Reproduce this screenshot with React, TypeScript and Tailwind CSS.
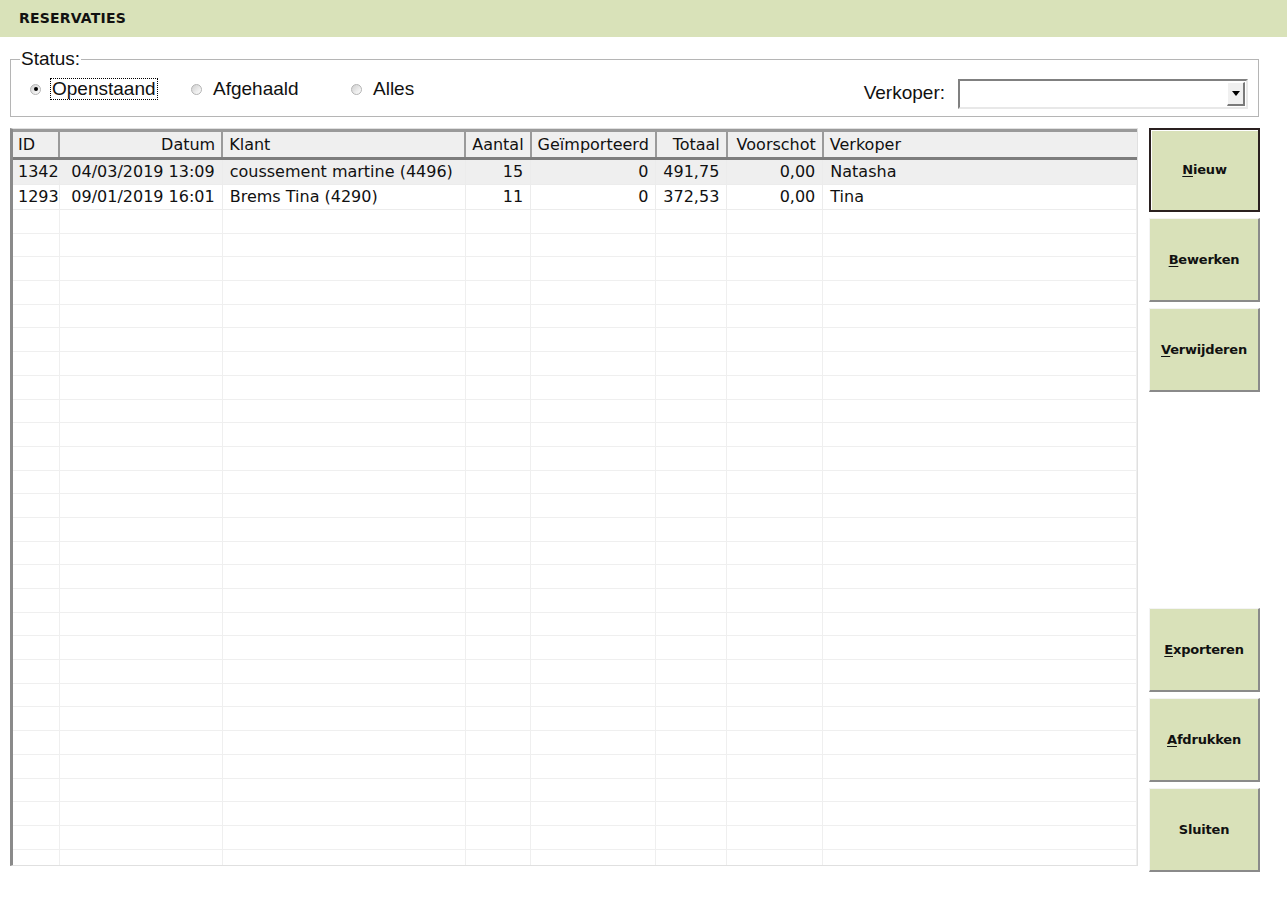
import React from 'react'

const cols = [
  { key: 'id', label: 'ID', w: 45, align: 'left' },
  { key: 'datum', label: 'Datum', w: 163, align: 'right' },
  { key: 'klant', label: 'Klant', w: 243, align: 'left' },
  { key: 'aantal', label: 'Aantal', w: 65, align: 'right' },
  { key: 'imp', label: 'Geïmporteerd', w: 125, align: 'right' },
  { key: 'totaal', label: 'Totaal', w: 71, align: 'right' },
  { key: 'voorschot', label: 'Voorschot', w: 96, align: 'right' },
  { key: 'verkoper', label: 'Verkoper', w: 314, align: 'left' },
] as const

const rows: Record<string, string>[] = [
  { id: '1342', datum: '04/03/2019 13:09', klant: 'coussement martine (4496)', aantal: '15', imp: '0', totaal: '491,75', voorschot: '0,00', verkoper: 'Natasha' },
  { id: '1293', datum: '09/01/2019 16:01', klant: 'Brems Tina (4290)', aantal: '11', imp: '0', totaal: '372,53', voorschot: '0,00', verkoper: 'Tina' },
]

const emptyRows = Array.from({ length: 28 })

function Radio({ checked, label, focused }: { checked?: boolean; label: string; focused?: boolean }) {
  return (
    <label className="flex items-center gap-[10px]">
      <span className="w-[11px] h-[11px] rounded-full border border-[#b4b4b4] bg-gradient-to-br from-[#d0d0d0] to-white flex items-center justify-center">
        {checked && <span className="w-[4px] h-[4px] rounded-full bg-black" />}
      </span>
      <span className={focused ? 'px-[1px] outline outline-1 outline-dotted outline-black leading-[20px]' : 'px-[1px] leading-[20px]'}>{label}</span>
    </label>
  )
}

function Btn({ label, hot, isDefault }: { label: string; hot?: boolean; isDefault?: boolean }) {
  const first = label.slice(0, 1)
  const rest = label.slice(1)
  return (
    <button
      className={
        'w-[111px] h-[84px] bg-[#d9e1b9] text-[13px] font-bold text-[#111] font-["DejaVu_Sans",sans-serif] tracking-[-0.2px] flex items-center justify-center ' +
        (isDefault
          ? 'border-2 border-[#2a2020] shadow-[inset_1px_1px_0_#fff]'
          : 'border-t border-l border-t-[#f4f4f4] border-l-[#f4f4f4] border-b-2 border-r-2 border-b-[#8a8a8a] border-r-[#8a8a8a]')
      }
    >
      {hot ? (
        <span>
          <span className="underline underline-offset-2">{first}</span>
          {rest}
        </span>
      ) : (
        label
      )}
    </button>
  )
}

export default function App() {
  return (
    <div className="w-[1287px] h-[903px] bg-white overflow-hidden font-['Liberation_Sans',Arial,sans-serif] text-black">
      {/* title bar */}
      <div className="h-[37px] bg-[#d9e2b9] flex items-center pl-[19px]">
        <span className="text-[14px] font-bold tracking-[0.2px] font-['DejaVu_Sans',sans-serif] text-[#111]">RESERVATIES</span>
      </div>

      {/* status filter */}
      <fieldset className="mx-[10px] mt-[13px] w-[1249px] h-[67px] border border-[#b5b5b5] pl-[19px] pr-[10px]">
        <legend className="text-[19px] leading-[18px] px-[1px] -ml-[10px] text-[#111]">Status:</legend>
        <div className="flex items-start w-full text-[19px] text-[#111] mt-[11px]">
          <div className="w-[161px]">
            <Radio checked focused label="Openstaand" />
          </div>
          <div className="w-[160px]">
            <Radio label="Afgehaald" />
          </div>
          <Radio label="Alles" />
          <div className="ml-auto flex items-start gap-[13px] mt-[-11px]">
            <span className="mt-[11px]">Verkoper:</span>
            <div className="mt-[11px] w-[290px] h-[30px] border-2 border-t-[#808080] border-l-[#808080] border-r-[#e8e8e8] border-b-[#e8e8e8] bg-white flex justify-end items-center pr-[1px]">
              <div className="w-[18px] h-[24px] bg-[#f0f0f0] border-r-2 border-b-2 border-r-[#7a7a7a] border-b-[#7a7a7a] border-t border-l border-t-white border-l-white flex items-center justify-center">
                <svg width="8" height="5" viewBox="0 0 8 5"><path d="M0 0h8L4 5z" fill="#000" /></svg>
              </div>
            </div>
          </div>
        </div>
      </fieldset>

      <div className="flex mt-[11px] ml-[10px]">
        {/* grid */}
        <div className="w-[1128px] h-[738px] border border-[#e0e0e0] border-l-[3px] border-l-[#8a8a8a] overflow-hidden bg-white">
          <table className="table-fixed border-collapse text-[16px] font-['DejaVu_Sans',sans-serif] text-[#111]">
            <colgroup>
              {cols.map((c) => (
                <col key={c.key} style={{ width: c.w }} />
              ))}
            </colgroup>
            <thead>
              <tr className="h-[28px] bg-[#efefef]">
                {cols.map((c) => (
                  <th
                    key={c.key}
                    className={
                      'font-normal px-[6px] first:pl-[5px] whitespace-nowrap border-t-[3px] border-t-[#9a9a9a] border-b-[3px] border-b-[#7d7d7d] border-r-2 border-r-[#9a9a9a] last:border-r-0 ' +
                      (c.align === 'right' ? 'text-right' : 'text-left')
                    }
                  >
                    {c.label}
                  </th>
                ))}
              </tr>
            </thead>
            <tbody>
              {rows.map((r, i) => (
                <tr key={r.id} className={'h-[24px] ' + (i === 0 ? 'bg-[#efefef]' : 'bg-white')}>
                  {cols.map((c) => (
                    <td
                      key={c.key}
                      className={
                        'px-[7px] first:pl-[5px] first:pr-0 whitespace-nowrap border-r border-b border-[#ececec] ' +
                        (c.align === 'right' ? 'text-right' : 'text-left')
                      }
                    >
                      {r[c.key]}
                    </td>
                  ))}
                </tr>
              ))}
              {emptyRows.map((_, i) => (
                <tr key={i} className="h-[23.7px]">
                  {cols.map((c) => (
                    <td key={c.key} className="border-r border-b border-[#efefef]" />
                  ))}
                </tr>
              ))}
            </tbody>
          </table>
        </div>

        {/* buttons */}
        <div className="ml-[11px] flex flex-col gap-[6px]">
          <Btn label="Nieuw" hot isDefault />
          <Btn label="Bewerken" hot />
          <Btn label="Verwijderen" hot />
          <div className="h-[204px]" />
          <Btn label="Exporteren" hot />
          <Btn label="Afdrukken" hot />
          <Btn label="Sluiten" />
        </div>
      </div>
    </div>
  )
}
